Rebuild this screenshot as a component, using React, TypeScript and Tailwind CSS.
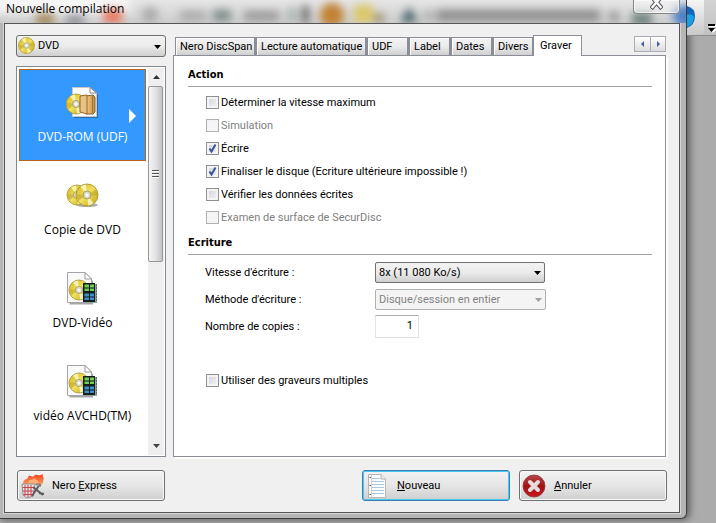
import { useState, type ReactNode } from "react";

const ui = "font-['Roboto','Liberation_Sans',sans-serif]";
const segoe = "font-['Open_Sans','Noto_Sans',sans-serif]";
const strong = "font-['DejaVu_Sans_Condensed','DejaVu_Sans',sans-serif] font-bold";

function Disc({ cx, cy, r }: { cx: number; cy: number; r: number }) {
  return (
    <g transform={`translate(${cx} ${cy}) scale(${r / 10})`}>
      <circle r="10" fill="url(#gold)" stroke="#a8922a" strokeWidth="0.8" />
      <path d="M0 0 L-6 -7.5 A9.6 9.6 0 0 1 -1 -9.5Z M0 0 L6 7.5 A9.6 9.6 0 0 1 1 9.5Z" fill="#fffbd0" opacity="0.8" />
      <path d="M0 0 L-9.5 -1 A9.6 9.6 0 0 0 -8 5Z M0 0 L9.5 1 A9.6 9.6 0 0 0 8 -5Z" fill="#b79a10" opacity="0.45" />
      <circle r="3.6" fill="#d9d9c8" stroke="#a39a5c" strokeWidth="0.8" />
      <circle r="1.5" fill="#fff" />
    </g>
  );
}

function Defs() {
  return (
    <svg width="0" height="0" className="absolute" aria-hidden="true">
      <defs>
        <linearGradient id="gold" x1="0" y1="0" x2="1" y2="1">
          <stop offset="0" stopColor="#d4b81c" />
          <stop offset="0.5" stopColor="#f0e060" />
          <stop offset="1" stopColor="#c0a010" />
        </linearGradient>
        <linearGradient id="folder" x1="0" y1="0" x2="1" y2="0">
          <stop offset="0" stopColor="#f3d08c" />
          <stop offset="1" stopColor="#c48a3a" />
        </linearGradient>
        <linearGradient id="red" x1="0" y1="0" x2="0" y2="1">
          <stop offset="0" stopColor="#b8474a" />
          <stop offset="0.5" stopColor="#a01216" />
          <stop offset="1" stopColor="#c8181c" />
        </linearGradient>
        <linearGradient id="fire" x1="0" y1="0" x2="0" y2="1">
          <stop offset="0" stopColor="#f0401c" />
          <stop offset="1" stopColor="#ffa060" />
        </linearGradient>
      </defs>
    </svg>
  );
}

function Page() {
  return (
    <>
      <path d="M2.500 1.500H20L26 8V31.500H2.500Z" transform="translate(1 1)" fill="#000" opacity="0.35" />
      <path d="M1.500 .500H19L25.500 7V30.500H1.500Z" fill="#fafafa" stroke="#a5a5a5" />
      <path d="M19 .500V7H25.500Z" fill="#fff" stroke="#999" />
    </>
  );
}

function RomIcon() {
  return (
    <svg width="34" height="34" viewBox="0 0 34 34" aria-hidden="true">
      <g transform="translate(6 1)">
        <path d="M2 2H20L26 8V31H2Z" fill="#1d4c86" opacity="0.6" />
        <path d="M.500 .500H18L24.500 6V29.500H.500Z" fill="#fbfbfb" stroke="#c9c9c9" />
        <path d="M18 .500V6H24.500Z" fill="#fff" stroke="#888" />
      </g>
      <Disc cx={10} cy={18} r={10} />
      <path d="M20 10 27 9 29 11V26L27 28H20Z" fill="url(#folder)" stroke="#8d6228" />
      <path d="M14 10 21 9V28L14 26Z" fill="#e9c386" stroke="#97692b" />
      <path d="M26.500 10V27" stroke="#a57632" />
    </svg>
  );
}

function CopyIcon() {
  return (
    <svg width="34" height="34" viewBox="0 0 34 34" aria-hidden="true">
      <ellipse cx="21" cy="26" rx="11" ry="2" fill="#777" opacity="0.6" />
      <Disc cx={11} cy={16} r={10} />
      <Disc cx={21} cy={16} r={11} />
    </svg>
  );
}

function VideoIcon() {
  return (
    <svg width="34" height="34" viewBox="0 0 34 34" aria-hidden="true">
      <Page />
      <Disc cx={13} cy={18} r={10} />
      <path d="M17 12H31V31H17Z" fill="#8fa39e" />
      <path d="M17 11H29V30H17Z" fill="#16201c" />
      <path d="M18.500 12.500H28V19H18.500Z" fill="#72cc58" />
      <path d="M18.500 21.500H28V28H18.500Z" fill="#3f8fca" />
      <path d="M23.500 12V29M18 16H28M18 25H28" stroke="#0d1a1a" />
      <path d="M30.500 12V30" stroke="#5c706b" strokeDasharray="2 1" />
    </svg>
  );
}

function ExpressIcon() {
  return (
    <svg width="26" height="26" viewBox="0 0 26 26" aria-hidden="true">
      <path d="M3 10C4 5 8 7 8 4C10 1 12 5 14 3C17 0 18 4 23 1C22 4 25 5 23 8C24 11 20 13 18 12H5Z" fill="url(#fire)" />
      <path d="M8 9C11 5 12 8 15 5C15 8 20 6 18 11H9Z" fill="#ffae78" />
      <path d="M2 11H15L13 23 7 25 3 22Z" fill="#e9e2e2" stroke="#8f8f8f" />
      <path d="M5 12V23M8 12V24M11 12V23M2.500 14.500H14M3 18H13.500M3.500 21.500H13" stroke="#c8434a" />
      <path d="M13 14 23 22M20 11 12 23M19 20 24 21" stroke="#5b5b5b" strokeWidth="2" />
      <path d="M16 11 21 13" stroke="#888" strokeWidth="2" />
    </svg>
  );
}

function NotepadIcon() {
  return (
    <svg width="20" height="26" viewBox="0 0 20 26" aria-hidden="true">
      <path d="M1.500 1.500H14L18.500 6V24.500H1.500Z" fill="#fcfcfc" stroke="#b5b5b5" />
      <path d="M14 1.500V6H18.500" fill="#eee" stroke="#b5b5b5" />
      <path d="M5 5.500H13M5 8.500H17M5 11.500H17M5 14.500H17M5 17.500H17M5 20.500H17" stroke="#a9c8e4" />
      <path d="M4.500 2V24" stroke="#d9cccc" />
      <path d="M2.500 4.500H4M2.500 12.500H4M2.500 21.500H4" stroke="#555" />
    </svg>
  );
}

function CancelIcon() {
  return (
    <svg width="24" height="24" viewBox="0 0 24 24" aria-hidden="true">
      <circle cx="12" cy="12" r="11" fill="url(#red)" stroke="#8f3a3c" strokeWidth="0.800" />
      <path d="M8 8 16 16M16 8 8 16" stroke="#e6dcdc" strokeWidth="4" strokeLinecap="round" />
    </svg>
  );
}

function Arrow({ className }: { className: string }) {
  return (
    <svg width="7" height="4" viewBox="0 0 7 4" className={className} aria-hidden="true">
      <path d="M0 0H7L3.500 4Z" fill="currentColor" />
    </svg>
  );
}

function Check({ label, on = false, disabled = false }: { label: string; on?: boolean; disabled?: boolean }) {
  const [checked, setChecked] = useState(on);
  return (
    <label className={`flex h-[23px] items-center gap-[2px] ${disabled ? "text-[#808080]" : "text-black"}`}>
      <span className="relative flex size-[13px]">
        <input
          type="checkbox"
          checked={checked}
          disabled={disabled}
          onChange={(e) => setChecked(e.target.checked)}
          className="size-[13px] appearance-none border border-[#8e8f8f] bg-linear-to-br from-[#cdd1d8] to-[#f6f6f6] shadow-[inset_0_0_0_2px_#f4f4f4] disabled:border-[#b1b1b1] disabled:from-[#f6f6f6]"
        />
        {checked && (
          <svg width="13" height="13" viewBox="0 0 13 13" className="pointer-events-none absolute inset-0" aria-hidden="true">
            <path d="M3.500 6.500 5.500 9.500 9.500 2.500" fill="none" stroke="#3b5699" strokeWidth="2" />
          </svg>
        )}
      </span>
      {label}
    </label>
  );
}

function Heading({ children }: { children: ReactNode }) {
  return <h2 className={`mr-[13px] ml-[14px] flex h-[23px] items-center border-b border-[#a0a0a0] ${strong}`}>{children}</h2>;
}

const tabs = [
  { name: "Nero DiscSpan", width: "w-[81px]" },
  { name: "Lecture automatique", width: "w-[111px]" },
  { name: "UDF", width: "w-[42px]" },
  { name: "Label", width: "w-[42px]" },
  { name: "Dates", width: "w-[42px]" },
  { name: "Divers", width: "w-[41px]" },
];

const projects = [
  { name: "DVD-ROM (UDF)", icon: <RomIcon /> },
  { name: "Copie de DVD", icon: <CopyIcon /> },
  { name: "DVD-Vidéo", icon: <VideoIcon /> },
  { name: "vidéo AVCHD(TM)", icon: <VideoIcon /> },
];

const face = "bg-linear-to-b from-[#f3f3f3] from-0% via-[#ebebeb] via-50% to-[#cfcfcf]";
const big = "flex h-[31px] w-[148px] items-center rounded-[3px] border bg-linear-to-b from-[#f3f3f3] from-0% via-[#e6e6e6] via-50% to-[#cfcfcf]";

function TitleBar() {
  return (
    <header className="relative h-[23px] overflow-hidden bg-linear-to-b from-[#e6e6e6] to-[#cdcdcd]">
      <svg className="absolute inset-0" width="100%" height="23" aria-hidden="true">
        <g className="blur-[4px]">
          <rect x="-10" y="-4" width="140" height="17" fill="#fff" opacity="0.700" />
          <rect x="36" y="13" width="18" height="12" fill="#a28a60" />
          <rect x="66" y="15" width="18" height="10" fill="#8f9299" />
          <rect x="104" y="9" width="18" height="14" fill="#e8765e" />
          <circle cx="150" cy="15" r="8" fill="#aaa" />
          <rect x="180" y="11" width="26" height="10" fill="#aaa" />
          <rect x="213" y="10" width="18" height="11" fill="#7c8a88" />
          <rect x="244" y="11" width="35" height="10" fill="#999" />
          <rect x="288" y="8" width="8" height="14" fill="#a4b0aa" />
          <rect x="302" y="6" width="7" height="17" fill="#666" />
          <circle cx="332" cy="15" r="12" fill="#c18232" />
          <rect x="354" y="5" width="19" height="18" fill="#dcc868" />
          <rect x="374" y="14" width="10" height="8" fill="#9a8a6a" />
          <path d="M400 22 409 7 418 22Z" fill="#3f5c62" />
          <rect x="425" y="11" width="6" height="9" fill="#999" />
          <rect x="436" y="10" width="164" height="11" fill="#8c8c8c" />
          <rect x="610" y="12" width="8" height="9" fill="#888" />
          <rect x="632" y="13" width="20" height="12" fill="#6d807c" />
          <circle cx="684" cy="16" r="11" fill="#4d7fc8" />
        </g>
      </svg>
      <h1 className={`relative pl-[6px] text-[12px] leading-[18px] text-black ${segoe}`}>Nouvelle compilation</h1>
      <button
        aria-label="Fermer"
        className="absolute top-0 right-[6px] flex h-[14px] w-[47px] items-start justify-center rounded-b-[4px] border border-t-0 border-[#858585] bg-white/40 shadow-[inset_0_0_0_1px_#ffffff90]"
      >
        <svg width="13" height="10" viewBox="0 0 13 10" aria-hidden="true">
          <path d="M2.500 -2.500 10.500 7M10.500 -2.500 2.500 7" stroke="#55565e" strokeWidth="4.500" strokeLinecap="square" />
          <path d="M2.500 -2.500 10.500 7M10.500 -2.500 2.500 7" stroke="#fff" strokeWidth="2.500" strokeLinecap="square" />
        </svg>
      </button>
    </header>
  );
}

function ProjectList() {
  return (
    <div className="flex flex-1 border border-[#828790] bg-white p-px">
      <ul className={`flex flex-1 flex-col gap-px pt-px pl-px text-[12px] ${segoe}`}>
        {projects.map((p, i) => (
          <li key={p.name}>
            <button
              className={`relative flex h-[92px] w-full flex-col items-center border pt-4 leading-[18px] ${
                i === 0 ? "border-[#b8651b] bg-[#3399ff] text-white" : "border-transparent text-black"
              }`}
            >
              {p.icon}
              <span className="mt-2">{p.name}</span>
              {i === 0 && (
                <svg width="7" height="14" viewBox="0 0 7 14" className="absolute top-[39px] right-[9px]" aria-hidden="true">
                  <path d="M0 0 7 7 0 14Z" fill="#fff" />
                </svg>
              )}
            </button>
          </li>
        ))}
      </ul>
      <div className="ml-[2px] flex w-4 flex-col bg-[#efefef]">
        <button aria-label="Défiler vers le haut" className="flex h-[18px] items-center justify-center">
          <Arrow className="rotate-180 text-[#333]" />
        </button>
        <div className="mr-px flex h-44 flex-col items-center justify-center gap-px rounded-[2px] border border-[#979797] bg-linear-to-r from-[#f5f5f5] via-[#e4e4e6] to-[#c2c3c6]">
          <i className="h-[2px] w-[7px] border-t border-[#555] bg-white" />
          <i className="h-[2px] w-[7px] border-t border-[#555] bg-white" />
          <i className="h-[2px] w-[7px] border-t border-[#555] bg-white" />
        </div>
        <button aria-label="Défiler vers le bas" className="mt-auto flex h-[18px] items-center justify-center">
          <Arrow className="text-[#444]" />
        </button>
      </div>
    </div>
  );
}

function BurnPanel() {
  const row = "flex h-[27px] items-center pl-[31px]";
  return (
    <section className="flex-1 border border-[#8b8e98] bg-white pt-2 shadow-[2px_2px_0_#fff]">
      <Heading>Action</Heading>
      <div className="pt-[4px] pl-[32px]">
        <Check label="Déterminer la vitesse maximum" />
        <Check label="Simulation" disabled />
        <Check label="Écrire" on />
        <Check label="Finaliser le disque (Ecriture ultérieure impossible !)" on />
        <Check label="Vérifier les données écrites" />
        <Check label="Examen de surface de SecurDisc" disabled />
      </div>
      <div className="pt-[3px]">
        <Heading>Ecriture</Heading>
      </div>
      <div className="pt-1">
        <div className={row}>
          <label htmlFor="speed" className="w-[170px]">Vitesse d'écriture :</label>
          <div className="relative">
            <select id="speed" className={`block h-[21px] w-[170px] appearance-none rounded-[2px] border border-[#707070] pl-[3px] ${face}`}>
              <option>8x (11 080 Ko/s)</option>
            </select>
            <Arrow className="pointer-events-none absolute top-[9px] right-1" />
          </div>
        </div>
        <div className={row}>
          <label htmlFor="method" className="w-[170px]">Méthode d'écriture :</label>
          <div className="relative">
            <select
              id="method"
              disabled
              className="block h-[21px] w-[171px] appearance-none rounded-[2px] border border-[#adb2b5] bg-[#f4f4f4] pl-[3px] text-[#838383] opacity-100"
            >
              <option>Disque/session en entier</option>
            </select>
            <Arrow className="pointer-events-none absolute top-[9px] right-1 text-[#a0a0a0]" />
          </div>
        </div>
        <div className={row}>
          <label htmlFor="copies" className="w-[170px]">Nombre de copies :</label>
          <input
            id="copies"
            defaultValue="1"
            className="h-[23px] w-11 rounded-[1px] border border-[#e2e3ea] border-t-[#abadb3] bg-white pr-[5px] pb-[2px] text-right"
          />
        </div>
      </div>
      <div className="pt-[29px] pl-[32px]">
        <Check label="Utiliser des graveurs multiples" />
      </div>
    </section>
  );
}

export default function App() {
  return (
    <div className={`flex min-h-screen bg-[#ababab] text-[11px] leading-[14px] text-black ${ui}`}>
      <Defs />
      <main className="mb-[4px] flex flex-1 flex-col rounded-br-[6px] border-r border-b border-[#3c3c3c] bg-[#b5b5b5] shadow-[2px_0_7px_1px_#00000070]">
        <TitleBar />
        <div className="mr-[6px] mb-[5px] ml-[4px] flex flex-1 flex-col border border-[#555] bg-[#f0f0f0] px-[11px] pt-[11px] pb-[11px] shadow-[0_0_0_1px_#d6d6d6]">
          <div className="flex flex-1 gap-[7px]">
            <aside className="flex w-[150px] flex-col gap-[9px]">
              <div className="relative">
                <select
                  aria-label="Type de disque"
                  className={`block h-[22px] w-full appearance-none rounded-[3px] border border-[#707070] pl-[21px] ${face}`}
                >
                  <option>DVD</option>
                </select>
                <svg width="17" height="17" viewBox="0 0 17 17" className="pointer-events-none absolute top-[2px] left-[2px]" aria-hidden="true">
                  <Disc cx={8.5} cy={8.5} r={8} />
                </svg>
                <Arrow className="pointer-events-none absolute top-[10px] right-[5px]" />
              </div>
              <ProjectList />
            </aside>
            <div className="flex flex-1 flex-col pr-[2px]">
              <div role="tablist" className="flex h-5 items-end pl-[2px]">
                {tabs.map((t) => (
                  <button
                    key={t.name}
                    role="tab"
                    className={`h-[18px] border border-r-2 border-b-0 border-[#8b8e98] pl-1 text-left whitespace-nowrap shadow-[inset_1px_1px_0_#fff] ${face} ${t.width}`}
                  >
                    {t.name}
                  </button>
                ))}
                <button role="tab" aria-selected="true" className="z-10 -mr-px -mb-px -ml-px h-[21px] w-[49px] border border-b-0 border-[#8b8e98] bg-white pl-[6px] text-left">
                  Graver
                </button>
                <div className="mb-[3px] ml-auto flex border border-[#a9abb5] bg-[#a9abb5]">
                  <button aria-label="Onglets précédents" className="flex h-[14px] w-[15px] items-center justify-center bg-linear-to-b from-white to-[#dcdcdc]">
                    <svg width="3" height="6" viewBox="0 0 3 6" aria-hidden="true"><path d="M3 0V6L0 3Z" fill="#4059a8" /></svg>
                  </button>
                  <button aria-label="Onglets suivants" className="ml-px flex h-[14px] w-[14px] items-center justify-center bg-linear-to-b from-white to-[#dcdcdc]">
                    <svg width="3" height="6" viewBox="0 0 3 6" aria-hidden="true"><path d="M0 0V6L3 3Z" fill="#4059a8" /></svg>
                  </button>
                </div>
              </div>
              <BurnPanel />
            </div>
          </div>
          <footer className="flex gap-[9px] pt-[13px] pr-px pl-px">
            <button className={`${big} mr-auto gap-[6px] border-[#707070] pl-[2px] shadow-[inset_0_0_0_1px_#f8f8f8]`}>
              <ExpressIcon />
              <span>Nero <u>E</u>xpress</span>
            </button>
            <button className={`${big} gap-[10px] border-[#3c7fb1] pl-1 shadow-[inset_0_0_0_1px_#48c8f0]`}>
              <NotepadIcon />
              <span><u>N</u>ouveau</span>
            </button>
            <button className={`${big} gap-[8px] border-[#707070] pl-[2px] shadow-[inset_0_0_0_1px_#f8f8f8]`}>
              <CancelIcon />
              <span><u>A</u>nnuler</span>
            </button>
          </footer>
        </div>
      </main>
      <aside className="w-[29px]">
        <div className="h-9 border-b border-[#8a8a8a] bg-linear-to-b from-[#f5f5f5] to-[#c8c8c8]">
          <svg width="29" height="35" viewBox="0 0 29 35" aria-hidden="true">
            <path d="M17 0H29V35H14Q17 34 17 30Z" fill="#bdbdbd" opacity="0.600" />
            <path d="M0 6Q8 8 8 16 8 25 0 28Z" fill="#1565b8" />
            <path d="M0 15Q5 13 7 17 6 25 0 27Z" fill="#18a0e0" />
            <path d="M22 25H29V27H22ZM22 29H30L26 33Z" fill="#fff" />
            <path d="M21 24H28V26H21ZM21 28H28L24.500 32Z" fill="#000" />
          </svg>
        </div>
      </aside>
    </div>
  );
}
